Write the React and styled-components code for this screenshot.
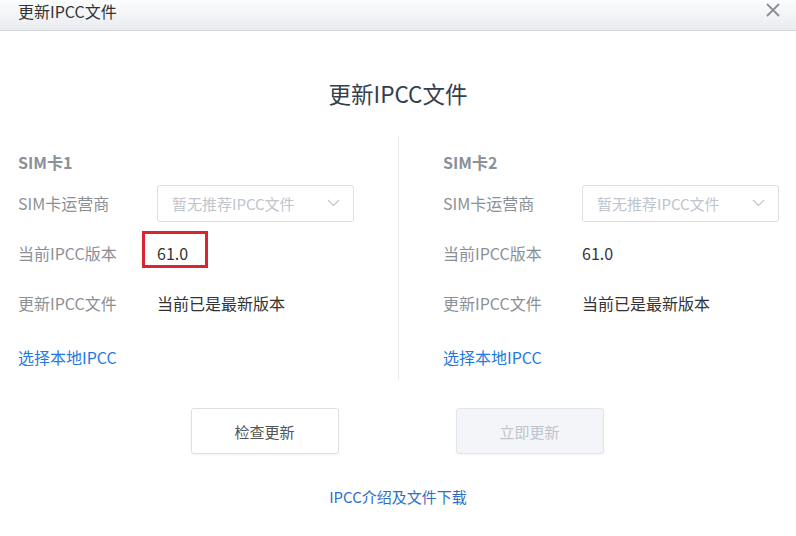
import React from "react";
import styled, { createGlobalStyle } from "styled-components";

const Global = createGlobalStyle`
  html, body { margin: 0; padding: 0; background: #fff; }
  body { font-family: "Noto Sans CJK SC", "Noto Sans", sans-serif; }
  * { box-sizing: border-box; }
`;

const Window = styled.div`
  width: 796px;
  height: 536px;
  background: #fff;
  display: flex;
  flex-direction: column;
  overflow: hidden;
`;

const TitleBar = styled.div`
  height: 31px;
  flex: none;
  display: flex;
  justify-content: space-between;
  align-items: flex-start;
  padding: 0 16px 0 18px;
  background: linear-gradient(#fbfcfd, #e9ecf0);
  border-bottom: 1px solid #d3d7dc;
`;

const TitleText = styled.div`
  font-size: 16px;
  line-height: 22px;
  color: #333;
`;

const CloseButton = styled.div`
  width: 14px;
  height: 14px;
  margin-top: 3px;
  display: flex;
`;

const Heading = styled.h1`
  margin: 47px 0 0;
  text-align: center;
  font-size: 22.5px;
  line-height: 30px;
  font-weight: 400;
  color: #363e4c;
`;

const Columns = styled.div`
  margin-top: 28px;
  display: grid;
  grid-template-columns: 398px 1px 1fr;
  height: 244px;
`;

const Divider = styled.div`
  background: #e8eaed;
`;

const Column = styled.div`
  padding: 14px 0 0 ${(p) => p.$pad}px;
  display: flex;
  flex-direction: column;
`;

const SimTitle = styled.div`
  font-size: 16px;
  line-height: 24px;
  font-weight: 700;
  color: #8a9098;
  margin-bottom: 4px;
`;

const Row = styled.div`
  height: 50px;
  display: flex;
  align-items: center;
`;

const Label = styled.div`
  width: 139px;
  flex: none;
  font-size: 16px;
  color: #8c9096;
`;

const Value = styled.div`
  position: relative;
  font-size: 16px;
  color: #333;
`;

const Highlight = styled.div`
  position: absolute;
  left: -15px;
  top: -10px;
  width: 66px;
  height: 37px;
  border: 3px solid #dc2430;
`;

const Select = styled.div`
  width: 197px;
  height: 37px;
  border: 1px solid #dcdfe6;
  border-radius: 3px;
  display: flex;
  align-items: center;
  justify-content: space-between;
  padding: 0 13px 0 14px;
  font-size: 15px;
  color: #c0c4cc;
`;

const Link = styled.a`
  margin-top: 17px;
  font-size: 16px;
  line-height: 24px;
  color: #2479e0;
  text-decoration: none;
  cursor: pointer;
`;

const Buttons = styled.div`
  margin-top: 28px;
  display: flex;
  justify-content: center;
  gap: 117px;
  padding-right: 2px;
`;

const Button = styled.button`
  width: 148px;
  height: 46px;
  border-radius: 3px;
  font-family: inherit;
  font-size: 15px;
  border: 1px solid ${(p) => (p.disabled ? "#e2e5ea" : "#dcdfe6")};
  background: ${(p) => (p.disabled ? "#f3f5f8" : "#fff")};
  color: ${(p) => (p.disabled ? "#c0c4cc" : "#555")};
  box-shadow: 0 1px 2px rgba(0, 0, 0, 0.05);
`;

const Footer = styled.div`
  margin-top: 31px;
  text-align: center;
  font-size: 15px;
  line-height: 24px;
  color: #2f6fc8;
`;

const Chevron = () => (
  <svg width="13" height="8" viewBox="0 0 13 8">
    <path d="M1 1l5.5 5.5L12 1" fill="none" stroke="#c0c4cc" strokeWidth="1.2" />
  </svg>
);

const SimColumn = ({ n, pad, highlight }) => (
  <Column $pad={pad}>
    <SimTitle>SIM卡{n}</SimTitle>
    <Row>
      <Label>SIM卡运营商</Label>
      <Select>
        <span>暂无推荐IPCC文件</span>
        <Chevron />
      </Select>
    </Row>
    <Row>
      <Label>当前IPCC版本</Label>
      <Value>
        61.0
        {highlight && <Highlight />}
      </Value>
    </Row>
    <Row>
      <Label>更新IPCC文件</Label>
      <Value>当前已是最新版本</Value>
    </Row>
    <Link>选择本地IPCC</Link>
  </Column>
);

export default function App() {
  return (
    <Window>
      <Global />
      <TitleBar>
        <TitleText>更新IPCC文件</TitleText>
        <CloseButton>
          <svg width="14" height="14" viewBox="0 0 14 14">
            <path d="M1 1l12 12M13 1L1 13" stroke="#8a8f96" strokeWidth="1.8" />
          </svg>
        </CloseButton>
      </TitleBar>
      <Heading>更新IPCC文件</Heading>
      <Columns>
        <SimColumn n={1} pad={18} highlight />
        <Divider />
        <SimColumn n={2} pad={44} />
      </Columns>
      <Buttons>
        <Button>检查更新</Button>
        <Button disabled>立即更新</Button>
      </Buttons>
      <Footer>IPCC介绍及文件下载</Footer>
    </Window>
  );
}
